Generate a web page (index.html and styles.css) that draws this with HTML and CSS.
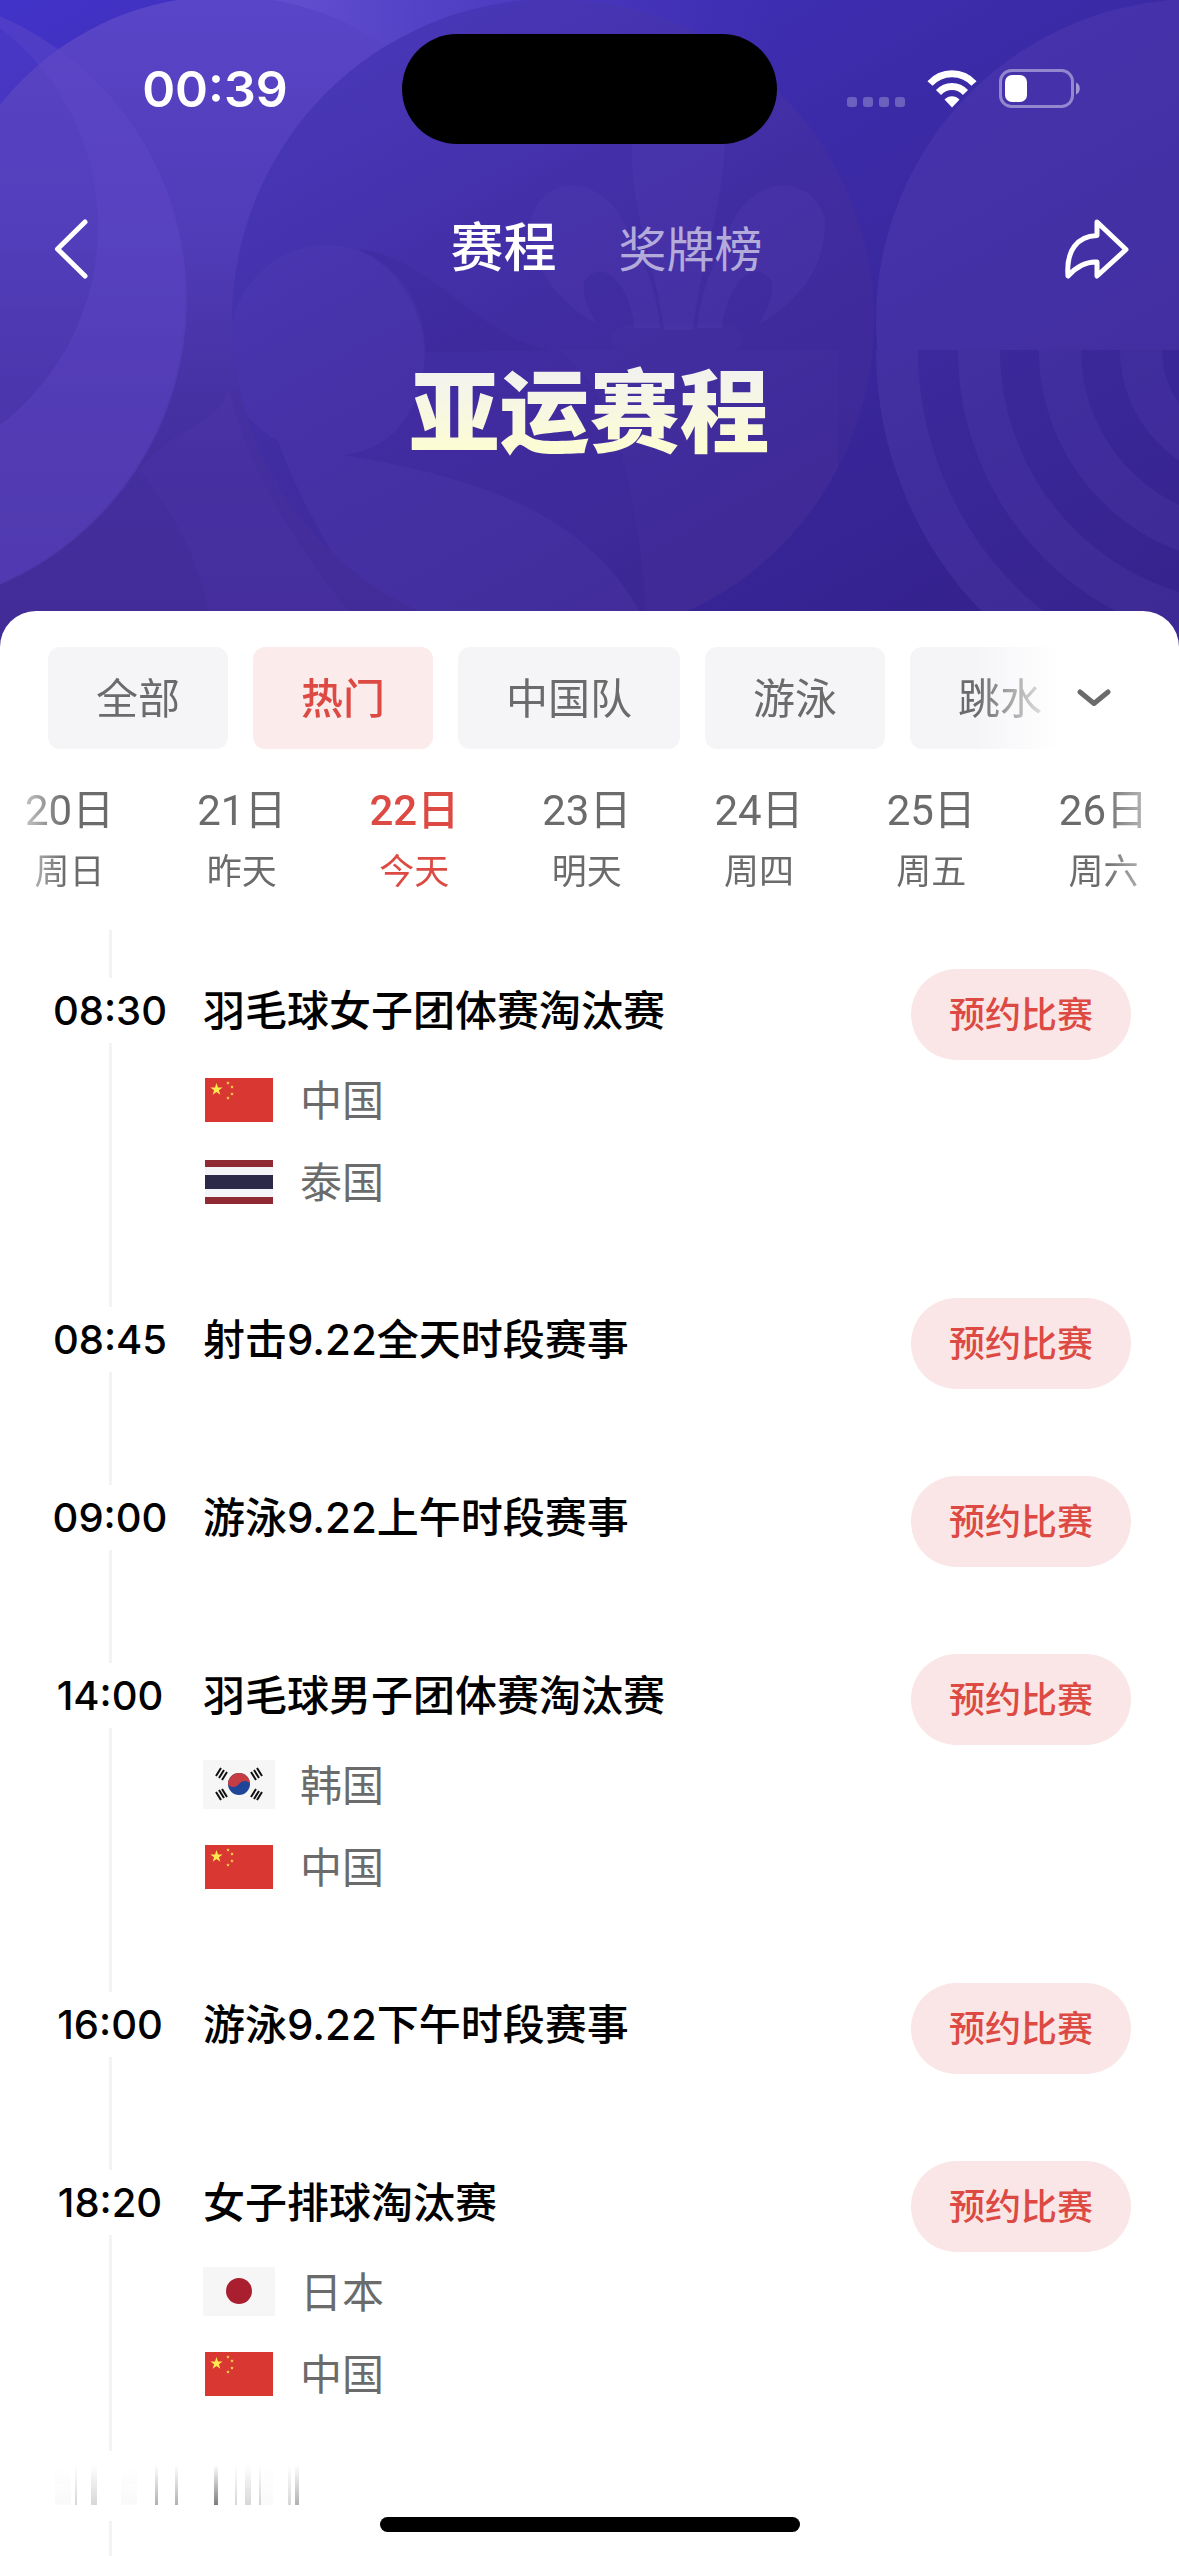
FILE: index.html
```html
<!DOCTYPE html>
<html lang="zh-CN">
    <head>
        <meta charset="utf-8">
        <meta name="viewport" content="width=device-width, initial-scale=1">
        <title>亚运赛程</title>

        <link rel="stylesheet" href="styles.css">
    </head>
    <body>
        <!-- flags used in the list -->
        <svg class="sprite" aria-hidden="true">
            <symbol id="star" viewBox="-10 -10 20 20">
                <path d="M0-10 2.3-3.1 9.5-3.1 3.7 1.2 5.9 8.1 0 3.8-5.9 8.1-3.7 1.2-9.5-3.1-2.3-3.1Z"/>
            </symbol>
            <symbol id="flag-cn" viewBox="0 0 72 50">
                <rect x="2" y="3" width="68" height="44" fill="#d93832"/>
                <g fill="#fcea4f">
                    <use href="#star" x="7" y="8" width="13" height="13"/>
                    <use href="#star" x="23" y="6" width="4" height="4"/>
                    <use href="#star" x="27" y="10" width="4" height="4"/>
                    <use href="#star" x="27" y="17" width="4" height="4"/>
                    <use href="#star" x="23" y="21" width="4" height="4"/>
                </g>
            </symbol>
            <symbol id="flag-th" viewBox="0 0 72 50">
                <rect x="2" y="3" width="68" height="44" fill="#8f2a35"/>
                <rect x="2" y="10" width="68" height="30" fill="#f4f3f7"/>
                <rect x="2" y="18" width="68" height="14" fill="#2c2848"/>
            </symbol>
            <symbol id="flag-kr" viewBox="0 0 72 50">
                <rect width="72" height="49" fill="#f6f6f6"/>
                <circle cx="36" cy="24" r="11" fill="#1e4597"/>
                <path d="M25 24a11 11 0 0 1 22 0c-2-4-8-4-11 0s-9 4-11 0Z" fill="#c63c43"/>
                <g stroke="#111" stroke-width="2">
                    <path d="M13 16l5-8M16 18l5-8M19 20l5-8"/>
                    <path d="M48 12l5 8M51 10l5 8M54 8l5 8"/>
                    <path d="M13 32l5 8M16 30l5 8M19 29l5 8"/>
                    <path d="M48 37l5-8M51 39l5-8M54 40l5-8"/>
                </g>
            </symbol>
            <symbol id="flag-jp" viewBox="0 0 72 50">
                <rect width="72" height="49" fill="#f6f6f7"/>
                <circle cx="36" cy="24" r="13" fill="#a91f2f"/>
            </symbol>
        </svg>

        <header class="hero">
            <svg class="hero-bg" viewBox="0 0 1179 660" preserveAspectRatio="xMidYMin slice" aria-hidden="true">
                <defs>
                    <linearGradient id="base" x1="0" y1="0" x2="1" y2="1">
                        <stop offset="0" stop-color="#4233c8"/>
                        <stop offset=".5" stop-color="#3b2aa4"/>
                        <stop offset="1" stop-color="#321f86"/>
                    </linearGradient>
                    <linearGradient id="light" x1="0" y1="0" x2="0" y2="1">
                        <stop offset="0" stop-color="#5945c8"/>
                        <stop offset="1" stop-color="#44309f"/>
                    </linearGradient>
                    <linearGradient id="low" x1="0" y1="0" x2="0" y2="1">
                        <stop offset="0" stop-color="#4832a8" stop-opacity="0"/>
                        <stop offset=".5" stop-color="#442f9f"/>
                        <stop offset="1" stop-color="#412b96"/>
                    </linearGradient>
                    <linearGradient id="disc" gradientUnits="userSpaceOnUse" x1="350" y1="0" x2="700" y2="640">
                        <stop offset="0" stop-color="#4938ba"/>
                        <stop offset=".5" stop-color="#412da2"/>
                        <stop offset="1" stop-color="#3b2791"/>
                    </linearGradient>
                    <linearGradient id="top" gradientUnits="userSpaceOnUse" x1="300" y1="0" x2="780" y2="0">
                        <stop offset="0" stop-color="#604dce"/>
                        <stop offset="1" stop-color="#4d3abf" stop-opacity="0"/>
                    </linearGradient>
                    <clipPath id="above"><rect width="1179" height="350"/></clipPath>
                    <clipPath id="below"><rect y="350" width="1179" height="310"/></clipPath>
                    <clipPath id="inDisc"><circle cx="553" cy="320" r="321"/></clipPath>
                </defs>
                <rect width="1179" height="660" fill="url(#base)"/>
                <path d="M245 0H780V60H500L380 200Z" fill="url(#top)"/>
                <circle cx="225" cy="283" r="287" fill="url(#light)"/>
                <rect y="240" width="600" height="420" fill="url(#low)"/>
                <path d="M0 16A310 310 0 0 1 0 585V425A250 250 0 0 0 0 28Z" fill="#6a51cf" opacity=".28"/>
                <circle cx="-125" cy="300" r="310" fill="#5a43c4" opacity=".3"/>
                <circle cx="553" cy="320" r="321" fill="url(#disc)"/>
                <g fill="#6048be" clip-path="url(#inDisc)">
                    <path d="M229 347a98 102 0 0 1 196 0c0 60-30 104-83 108c120 20 240 50 300 160v60H400C360 590 310 530 278 441C240 420 229 390 229 347Z" opacity=".18"/>
                    <path d="M360 250C430 255 480 340 550 350L425 352C423 310 400 270 360 250Z" fill="#2f1d86" opacity=".15"/>
                    <path d="M632 130H725C725 210 700 260 693 330H664C655 260 628 210 632 130Z" opacity=".18"/>
                    <path d="M596 324C540 290 530 250 531 220C540 180 590 170 620 215C650 270 658 300 660 328H634C632 290 605 255 585 280C580 295 590 310 596 324Z" opacity=".18"/>
                    <path d="M760 324C816 290 826 250 825 220C816 180 766 170 736 215C708 270 700 300 697 328H722C726 290 750 255 771 280C776 295 766 310 760 324Z" opacity=".18"/>
                    <path d="M625 325H728C750 330 745 348 730 350H838V660H650C640 500 620 400 560 350H622C605 345 610 330 625 325Z" opacity=".08"/>
                </g>
                <path d="M139 470C180 520 205 570 218 660H390C310 570 250 480 229 388C215 430 180 420 139 470Z" fill="#5a43b8" opacity=".14"/>
                <g clip-path="url(#above)">
                    <circle cx="1197" cy="320" r="321" fill="#5b42b8" opacity=".34"/>
                </g>
                <g clip-path="url(#below)">
                    <circle cx="1253" cy="350" r="377" fill="#5b42b8" opacity=".1"/>
                    <g fill="none" stroke="#6048b4" stroke-width="42" opacity=".2">
                        <circle cx="1253" cy="350" r="356"/>
                        <circle cx="1253" cy="350" r="274"/>
                        <circle cx="1253" cy="350" r="193"/>
                        <circle cx="1253" cy="350" r="112"/>
                    </g>
                </g>
            </svg>

            <div class="status-bar">
                <time class="clock">00:39</time>
                <div class="island"></div>
                <div class="status-icons">
                    <svg class="signal" viewBox="0 0 58 40" aria-hidden="true">
                        <g fill="#fff" opacity=".25">
                            <rect y="28" width="10" height="10" rx="3"/>
                            <rect x="16" y="28" width="10" height="10" rx="3"/>
                            <rect x="32" y="28" width="10" height="10" rx="3"/>
                            <rect x="48" y="28" width="10" height="10" rx="3"/>
                        </g>
                    </svg>
                    <svg class="wifi" viewBox="0 0 50 40" aria-hidden="true">
                        <g fill="none" stroke="#fff" stroke-width="7">
                            <path d="M3 14.500C15 1.500 35 1.500 47 14.500"/>
                            <path d="M11.500 23.500C19 15.500 31 15.500 38.500 23.500"/>
                        </g>
                        <path d="M17.500 30.500C21.500 26 28.500 26 32.500 30.500L25 38.500Z" fill="#fff"/>
                    </svg>
                    <svg class="battery" viewBox="0 0 82 40" aria-hidden="true">
                        <rect x="1.500" y="1.500" width="72" height="36" rx="11" fill="none" stroke="#fff" stroke-opacity=".42" stroke-width="3"/>
                        <path d="M77 13.500C82 15 82 24 77 25.500Z" fill="#fff" opacity=".5"/>
                        <rect x="6" y="6" width="22" height="27" rx="7" fill="#fff"/>
                    </svg>
                </div>
            </div>

            <nav class="nav">
                <button class="back_btn" aria-label="返回">
                    <svg viewBox="0 0 34 60" width="34" height="60">
                        <path d="M31 3 3.500 30 31 57" fill="none" stroke="#fff" stroke-width="5" stroke-linecap="round" stroke-linejoin="round"/>
                    </svg>
                </button>
                <div class="tabs">
                    <a href="#schedule" class="tab tab-active">赛程</a>
                    <a href="#medals" class="tab">奖牌榜</a>
                </div>
                <button class="share_btn" aria-label="分享">
                    <svg viewBox="0 0 64 60" width="64" height="60">
                        <path d="M32 3 61 30.500 32 57V43C22 42 11 48 3 57C1 32 12 17 32 16.500Z" fill="none" stroke="#fff" stroke-width="5" stroke-linejoin="round"/>
                    </svg>
                </button>
            </nav>

            <h1 class="title">亚运赛程</h1>
        </header>

        <main class="sheet" id="schedule">
            <div class="filters">
                <div class="chips">
                    <button class="chip">全部</button>
                    <button class="chip chip-active">热门</button>
                    <button class="chip">中国队</button>
                    <button class="chip">游泳</button>
                    <button class="chip">跳水</button>
                </div>
                <button class="more_btn" aria-label="展开">
                    <svg viewBox="0 0 34 18" width="34" height="18">
                        <path d="M3 3 17 14.500 31 3" fill="none" stroke="#6b6b6b" stroke-width="5" stroke-linecap="round" stroke-linejoin="round"/>
                    </svg>
                </button>
            </div>

            <div class="dates">
                <button class="date"><span class="day">20日</span><span class="week">周日</span></button>
                <button class="date"><span class="day">21日</span><span class="week">昨天</span></button>
                <button class="date date-active"><span class="day">22日</span><span class="week">今天</span></button>
                <button class="date"><span class="day">23日</span><span class="week">明天</span></button>
                <button class="date"><span class="day">24日</span><span class="week">周四</span></button>
                <button class="date"><span class="day">25日</span><span class="week">周五</span></button>
                <button class="date"><span class="day">26日</span><span class="week">周六</span></button>
            </div>

            <ol class="events">
                <li class="event">
                    <time class="time">08:30</time>
                    <div class="info">
                        <h2 class="name">羽毛球女子团体赛淘汰赛</h2>
                        <ul class="teams">
                            <li class="team"><svg class="flag" aria-hidden="true"><use href="#flag-cn"/></svg><span>中国</span></li>
                            <li class="team"><svg class="flag" aria-hidden="true"><use href="#flag-th"/></svg><span>泰国</span></li>
                        </ul>
                    </div>
                    <button class="book_btn">预约比赛</button>
                </li>
                <li class="event">
                    <time class="time">08:45</time>
                    <div class="info">
                        <h2 class="name">射击9.22全天时段赛事</h2>
                    </div>
                    <button class="book_btn">预约比赛</button>
                </li>
                <li class="event">
                    <time class="time">09:00</time>
                    <div class="info">
                        <h2 class="name">游泳9.22上午时段赛事</h2>
                    </div>
                    <button class="book_btn">预约比赛</button>
                </li>
                <li class="event">
                    <time class="time">14:00</time>
                    <div class="info">
                        <h2 class="name">羽毛球男子团体赛淘汰赛</h2>
                        <ul class="teams">
                            <li class="team"><svg class="flag" aria-hidden="true"><use href="#flag-kr"/></svg><span>韩国</span></li>
                            <li class="team"><svg class="flag" aria-hidden="true"><use href="#flag-cn"/></svg><span>中国</span></li>
                        </ul>
                    </div>
                    <button class="book_btn">预约比赛</button>
                </li>
                <li class="event">
                    <time class="time">16:00</time>
                    <div class="info">
                        <h2 class="name">游泳9.22下午时段赛事</h2>
                    </div>
                    <button class="book_btn">预约比赛</button>
                </li>
                <li class="event">
                    <time class="time">18:20</time>
                    <div class="info">
                        <h2 class="name">女子排球淘汰赛</h2>
                        <ul class="teams">
                            <li class="team"><svg class="flag" aria-hidden="true"><use href="#flag-jp"/></svg><span>日本</span></li>
                            <li class="team"><svg class="flag" aria-hidden="true"><use href="#flag-cn"/></svg><span>中国</span></li>
                        </ul>
                    </div>
                    <button class="book_btn">预约比赛</button>
                </li>
                <li class="next-day">
                    <!-- next row, still fading in -->
                    <svg viewBox="0 0 254 40" width="254" height="40" aria-hidden="true">
                        <defs>
                            <linearGradient id="streak" gradientUnits="userSpaceOnUse" x1="0" y1="0" x2="0" y2="40">
                                <stop offset="0" stop-color="#444" stop-opacity="0"/>
                                <stop offset="1" stop-color="#444" stop-opacity=".7"/>
                            </linearGradient>
                        </defs>
                        <g fill="url(#streak)">
                            <g opacity=".04">
                                <rect x="4" width="16" height="40"/>
                                <rect x="70" width="16" height="40"/>
                                <rect x="208" width="14" height="40"/>
                            </g>
                            <g opacity=".3">
                                <rect x="24" width="2" height="40"/>
                                <rect x="40" width="6" height="40"/>
                                <rect x="184" width="2" height="40"/>
                                <rect x="194" width="6" height="40"/>
                                <rect x="208" width="2" height="40"/>
                                <rect x="237" width="3" height="40"/>
                            </g>
                            <g opacity=".6">
                                <rect x="104" width="3" height="40"/>
                                <rect x="124" width="3" height="40"/>
                                <rect x="244" width="4" height="40"/>
                            </g>
                            <rect x="163" width="4" height="40"/>
                        </g>
                    </svg>
                </li>
            </ol>
        </main>

        <div class="home-bar"></div>
    </body>
</html>
```
FILE: styles.css
```css
*{
    box-sizing: border-box;
}
body{
    display: flex;
    flex-direction: column;
    min-height: 100vh;
    margin: 0;
    position: relative;
    background-color: white;
    color: black;
    font-family: Inter, "Noto Sans CJK SC", sans-serif;
}
button{
    background: transparent;
    border: none;
    padding: 0;
    font-family: inherit;
    color: inherit;
    cursor: pointer;
}
svg{
    display: block;
}
ol,ul{
    list-style: none;
    margin: 0;
    padding: 0;
}
.sprite{
    position: absolute;
    width: 0;
    height: 0;
}

/* header */
.hero{
    position: relative;
    padding-bottom: 141px;
    color: white;
    background-color: #3b2aa4;
    overflow: hidden;
}
.hero-bg{
    position: absolute;
    top: 0;
    left: 0;
    width: 100%;
    height: 660px;
}
.status-bar,.nav,.title{
    position: relative;
}
.status-bar{
    display: grid;
    grid-template-columns: 1fr 375px 1fr;
    align-items: center;
    height: 178px;
}
.clock{
    padding-left: 28px;
    text-align: center;
    font-size: 50px;
    font-weight: 600;
}
.island{
    height: 110px;
    border-radius: 55px;
    background-color: black;
}
.status-icons{
    display: flex;
    justify-content: center;
    gap: 22px;
    padding-right: 28px;
}
.signal{
    width: 58px;
    height: 40px;
}
.wifi{
    width: 50px;
    height: 40px;
}
.battery{
    width: 82px;
    height: 40px;
}
.nav{
    display: grid;
    grid-template-columns: 1fr auto 1fr;
    align-items: center;
    height: 142px;
    padding: 0 50px 0 54px;
}
.back_btn{
    justify-self: start;
}
.share_btn{
    justify-self: end;
}
.tabs{
    display: flex;
    align-items: baseline;
    gap: 62px;
    padding-left: 30px;
}
.tab{
    color: rgba(255, 255, 255, 0.6);
    font-size: 48px;
    line-height: 80px;
    text-decoration: none;
}
.tab-active{
    color: white;
    font-size: 53px;
    font-weight: 500;
}
.title{
    margin: 0;
    text-align: center;
    font-size: 90px;
    font-weight: 900;
    line-height: 186px;
    color: transparent;
    background: linear-gradient(#f3f3ee 30%, #fdfdd0 75%);
    -webkit-background-clip: text;
    background-clip: text;
}

/* white sheet */
.sheet{
    display: flex;
    flex-direction: column;
    flex: 1;
    position: relative;
    margin-top: -36px;
    padding-top: 36px;
    border-radius: 36px 36px 0 0;
    background-color: white;
}
.filters{
    display: flex;
    align-items: center;
    padding-right: 68px;
}
.chips{
    display: flex;
    flex: 1;
    gap: 25px;
    min-width: 0;
    overflow: hidden;
    padding-left: 48px;
    margin-right: 16px;
    -webkit-mask-image: linear-gradient(to left, transparent, black 84px);
    mask-image: linear-gradient(to left, transparent, black 84px);
}
.chip{
    flex-shrink: 0;
    height: 102px;
    padding: 0 48px 6px;
    border-radius: 12px;
    background-color: #f5f5f8;
    color: #6b6b6b;
    font-size: 42px;
}
.chip-active{
    background-color: #fbebea;
    color: #dd4a43;
    font-weight: 500;
}
.dates{
    display: flex;
    gap: 83px;
    overflow: hidden;
    margin: 32px 20px 0 25px;
    color: #6b6b6b;
    -webkit-mask-image: linear-gradient(to right, rgba(0, 0, 0, 0.4), black 40px, black calc(100% - 56px), rgba(0, 0, 0, 0.3));
    mask-image: linear-gradient(to right, rgba(0, 0, 0, 0.4), black 40px, black calc(100% - 56px), rgba(0, 0, 0, 0.3));
}
.date{
    display: flex;
    flex-direction: column;
    flex-shrink: 0;
    align-items: center;
}
.day{
    font-family: Roboto, "Noto Sans CJK SC", sans-serif;
    font-size: 42px;
    line-height: 60px;
}
.week{
    font-size: 35px;
    line-height: 60px;
}
.date-active{
    color: #dd4a43;
}
.date-active .day{
    font-weight: 500;
}

/* timeline */
.events{
    flex: 1;
    margin-top: 29px;
    background: linear-gradient(#f3f3f4, #f3f3f4) 109px 0 / 3px 100% no-repeat;
}
.event{
    display: grid;
    grid-template-columns: 124px 1fr auto;
    column-gap: 31px;
    align-items: start;
    min-height: 178px;
    padding: 39px 48px 36px;
}
.time{
    margin-top: 9px;
    background-color: white;
    text-align: center;
    font-size: 40px;
    font-weight: 500;
    line-height: 65px;
}
.name{
    margin: 0;
    font-size: 42px;
    font-weight: 500;
    line-height: 84px;
}
.teams{
    margin-top: 6px;
}
.team{
    display: flex;
    align-items: center;
    gap: 25px;
    height: 82px;
    color: #6b6b6b;
    font-size: 42px;
}
.team span{
    padding-bottom: 6px;
}
.flag{
    width: 72px;
    height: 50px;
}
.book_btn{
    height: 91px;
    padding: 0 38px 6px;
    border-radius: 46px;
    background-color: #fae6e7;
    color: #dd4a43;
    font-size: 36px;
    font-weight: 500;
}
.next-day{
    padding: 14px 0 16px 51px;
    background-color: white;
}
.home-bar{
    position: absolute;
    bottom: 24px;
    left: 50%;
    width: 420px;
    height: 15px;
    margin-left: -210px;
    border-radius: 8px;
    background-color: black;
}
```
